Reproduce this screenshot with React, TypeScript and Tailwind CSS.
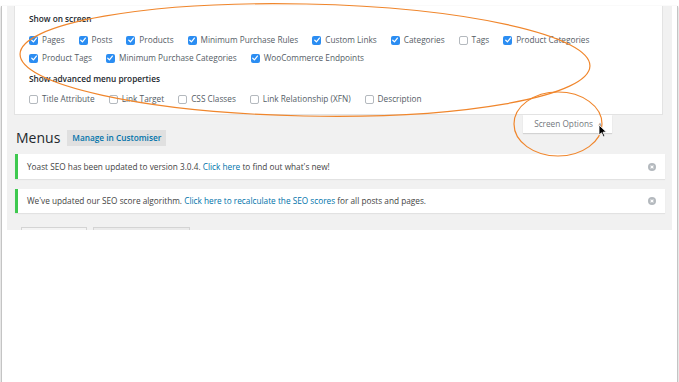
import React from 'react';

interface Option {
  label: string;
  checked: boolean;
}

const screenRows: Option[][] = [
  [
    { label: 'Pages', checked: true },
    { label: 'Posts', checked: true },
    { label: 'Products', checked: true },
    { label: 'Minimum Purchase Rules', checked: true },
    { label: 'Custom Links', checked: true },
    { label: 'Categories', checked: true },
    { label: 'Tags', checked: false },
    { label: 'Product Categories', checked: true },
  ],
  [
    { label: 'Product Tags', checked: true },
    { label: 'Minimum Purchase Categories', checked: true },
    { label: 'WooCommerce Endpoints', checked: true },
  ],
];

const advancedRow: Option[] = [
  { label: 'Title Attribute', checked: false },
  { label: 'Link Target', checked: false },
  { label: 'CSS Classes', checked: false },
  { label: 'Link Relationship (XFN)', checked: false },
  { label: 'Description', checked: false },
];

function CheckBox({ checked }: { checked: boolean }) {
  if (checked) {
    return (
      <span className="flex h-[9px] w-[9px] items-center justify-center rounded-[2px] bg-[#2b8df2]">
        <svg viewBox="0 0 10 10" className="h-[8px] w-[8px]">
          <path d="M2.2 5.3 L4.3 7.4 L8 2.6" stroke="#fff" strokeWidth="1.5" fill="none" strokeLinecap="round" strokeLinejoin="round" />
        </svg>
      </span>
    );
  }
  return <span className="h-[9px] w-[9px] rounded-[2px] border border-[#b4b9be] bg-white" />;
}

function OptionRow({ items }: { items: Option[] }) {
  return (
    <div className="flex h-[12px] items-center gap-[14px]">
      {items.map((item) => (
        <label key={item.label} className="flex items-center gap-[4px] whitespace-nowrap text-[#555d66]">
          <CheckBox checked={item.checked} />
          <span>{item.label}</span>
        </label>
      ))}
    </div>
  );
}

function Dismiss() {
  return (
    <svg viewBox="0 0 10 10" className="h-[8px] w-[8px]">
      <circle cx="5" cy="5" r="5" fill="#b4b9be" />
      <path d="M3.2 3.2 L6.8 6.8 M6.8 3.2 L3.2 6.8" stroke="#fff" strokeWidth="1.3" />
    </svg>
  );
}

export default function App() {
  return (
    <div className="relative h-[382px] w-[679px] overflow-hidden bg-white font-['Open_Sans',sans-serif] text-[8.25px] leading-[12px]">
      <div className="ml-[1px] h-[379px] w-[677px] border-x border-b border-x-[#c4c4c4] border-b-[#8a8a8a] bg-white shadow-[0_1px_2px_rgba(0,0,0,0.3)]">
        <div className="ml-[5px] mt-[6px] h-[224px] w-[665px] overflow-hidden bg-[#f1f1f1]">
          {/* screen options panel */}
          <div className="ml-[7px] h-[109px] w-[649px] border-x border-b border-[#e3e3e3] bg-white pl-[14px] pt-[7px]">
            <h5 className="font-semibold text-[#23282d]">Show on screen</h5>
            <div className="mt-[9px] flex flex-col gap-[6px]">
              {screenRows.map((row, i) => (
                <OptionRow key={i} items={row} />
              ))}
            </div>
            <h5 className="mt-[9px] font-semibold text-[#23282d]">Show advanced menu properties</h5>
            <div className="mt-[8px]">
              <OptionRow items={advancedRow} />
            </div>
          </div>

          <div className="flex items-start justify-between">
            <div className="ml-[9px] mt-[15px] flex items-center gap-[7px]">
              <h1 className="text-[14px] leading-[16px] text-[#23282d]">Menus</h1>
              <span className="flex h-[16px] w-[99px] items-center justify-center bg-[#e0e0e0] font-semibold text-[#0073aa]">
                Manage in Customiser
              </span>
            </div>
            <div className="mr-[60px] flex h-[18px] w-[89px] items-center justify-center gap-[4px] bg-white pl-[2px] text-[#72777c] shadow-[0_1px_1px_rgba(0,0,0,0.12)]">
              <span>Screen Options</span>
              <span className="text-[6px] text-[#a0a5aa]">▲</span>
            </div>
          </div>

          <div className="ml-[8px] mt-[8px] flex h-[25px] w-[650px] items-center justify-between border-l-[3px] border-[#3ec94f] bg-white pl-[9px] pr-[9px] text-[#444] shadow-[0_1px_1px_rgba(0,0,0,0.06)]">
            <p>
              Yoast SEO has been updated to version 3.0.4. <span className="text-[#0073aa]">Click here</span> to find out what's new!
            </p>
            <Dismiss />
          </div>
          <div className="ml-[8px] mt-[10px] flex h-[24px] w-[650px] items-center justify-between border-l-[3px] border-[#3ec94f] bg-white pl-[9px] pr-[9px] text-[#444] shadow-[0_1px_1px_rgba(0,0,0,0.06)]">
            <p>
              We've updated our SEO score algorithm.{' '}
              <span className="text-[#0073aa]">Click here to recalculate the SEO scores</span> for all posts and pages.
            </p>
            <Dismiss />
          </div>

          <div className="ml-[14px] mt-[14px] flex gap-[6px]">
            <div className="h-[26px] w-[66px] border border-[#d4d4d4] bg-[#f4f4f4]" />
            <div className="h-[26px] w-[97px] border border-[#d4d4d4] bg-[#ebebeb]" />
          </div>
        </div>
      </div>

      {/* annotation overlay */}
      <svg className="pointer-events-none absolute left-0 top-0" width="679" height="382">
        <ellipse cx="305" cy="60" rx="285" ry="56" transform="rotate(1.2 305 60)" fill="none" stroke="#f0862c" strokeWidth="1.2" />
        <ellipse cx="558" cy="124" rx="44" ry="32" fill="none" stroke="#f0862c" strokeWidth="1.2" />
        <path d="M599 125 L599 135 L601.5 132.8 L603.5 137 L605 136.3 L603 132.2 L606.3 132 Z" fill="#000" stroke="#fff" strokeWidth="0.8" />
      </svg>
    </div>
  );
}
